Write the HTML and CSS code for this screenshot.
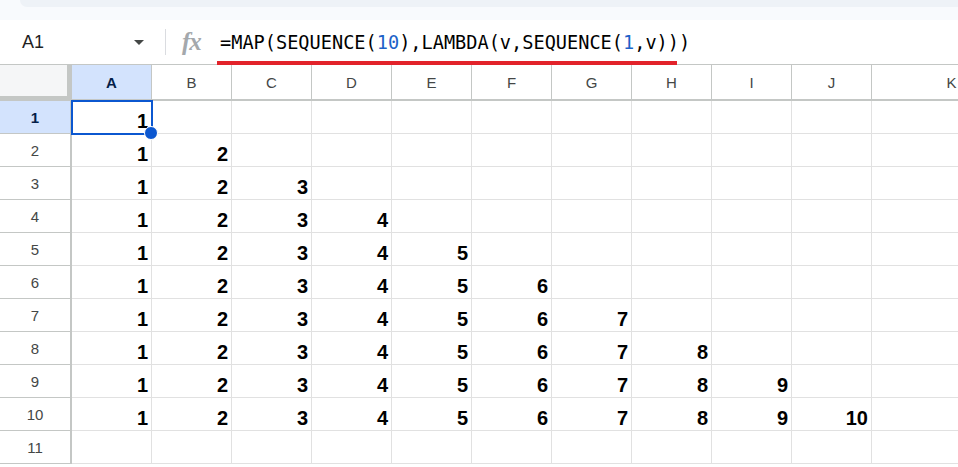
FILE: index.html
```html
<!DOCTYPE html>
<html lang="en">
<head>
  <meta charset="UTF-8">
  <meta name="viewport" content="width=device-width, initial-scale=1.0">
  <title>Sheet</title>
  <link rel="stylesheet" href="styles.css">
</head>
<body>
  <div class="toolbar-edge">
    <div class="toolbar-tail"></div>
  </div>

  <div class="formula-bar">
    <div class="name-box">
      <span class="cell-ref">A1</span>
      <span class="caret"></span>
    </div>
    <div class="divider"></div>
    <span class="fx">fx</span>
    <div class="formula">=MAP(SEQUENCE(<span class="num">10</span>),LAMBDA(v,SEQUENCE(<span class="num">1</span>,v)))</div>
    <div class="highlight"></div>
  </div>

  <div class="sheet" id="sheet"></div>

  <script>
    // Build the grid: header row, row numbers, and the triangle of values
    const sheet = document.getElementById('sheet');
    const letters = ['A', 'B', 'C', 'D', 'E', 'F', 'G', 'H', 'I', 'J', 'K'];
    const rows = 11;

    function add(cls, text) {
      const el = document.createElement('div');
      el.className = cls;
      if (text !== undefined) el.textContent = text;
      sheet.appendChild(el);
      return el;
    }

    // Column headers
    add('corner');
    letters.forEach((l, i) => {
      add(i === 0 ? 'col-head active' : 'col-head', l);
    });

    // Rows
    for (let r = 1; r <= rows; r++) {
      add(r === 1 ? 'row-head active' : 'row-head', r);
      for (let c = 1; c <= letters.length; c++) {
        const value = (r <= 10 && c <= r) ? c : '';
        const cell = add('cell', value);
        if (r === 1 && c === 1) {
          cell.classList.add('selected');
          const handle = document.createElement('span');
          handle.className = 'fill-handle';
          cell.appendChild(handle);
        }
      }
    }
  </script>
</body>
</html>
```

FILE: styles.css
```css
body {
  margin: 0;
  background: #fff;
  font-family: 'Liberation Sans', Arial, sans-serif;
  color: #1f1f1f;
  width: 958px;
  height: 467px;
  overflow: hidden;
}

/* bottom edge of the toolbar above */
.toolbar-edge {
  height: 20px;
  background: #f8fafd;
}

.toolbar-tail {
  margin-left: 20px;
  height: 7px;
  background: #eef2f7;
  border-bottom-left-radius: 14px;
}

.formula-bar {
  position: relative;
  height: 44px;
  display: flex;
  align-items: center;
}

.name-box {
  width: 144px;
  display: flex;
  align-items: center;
  justify-content: space-between;
  padding: 0 0 0 22px;
  box-sizing: border-box;
}

.cell-ref {
  font-size: 18px;
  color: #1f1f1f;
}

.caret {
  width: 0;
  height: 0;
  border-left: 5px solid transparent;
  border-right: 5px solid transparent;
  border-top: 5px solid #444746;
  margin-top: 1px;
}

.divider {
  width: 1px;
  height: 26px;
  background: #dadce0;
  margin: 0 0 0 21px;
}

.fx {
  font-family: 'Liberation Serif', serif;
  font-style: italic;
  font-weight: bold;
  font-size: 25px;
  color: #a4a8ac;
  margin-left: 16px;
  letter-spacing: -1px;
  width: 38px;
}

.formula {
  font-family: 'DejaVu Sans Mono', monospace;
  font-size: 18.6px;
  color: #000;
  white-space: nowrap;
}

.formula .num {
  color: #1d62c8;
}

/* red marker under the formula */
.highlight {
  position: absolute;
  left: 217px;
  top: 41px;
  width: 460px;
  height: 4px;
  background: #e2222a;
  z-index: 2;
}

.sheet {
  display: grid;
  grid-template-columns: 72px repeat(10, 80px) 160px;
  grid-template-rows: 36px;
  grid-auto-rows: 33px;
  border-top: 1px solid #c4c7c5;
  width: 958px;
  overflow: hidden;
}

.sheet > div {
  box-sizing: border-box;
}

.corner {
  background: #f5f6f7;
  border-right: 5px solid #c4c7c5;
  border-bottom: 5px solid #c4c7c5;
}

.col-head {
  display: flex;
  align-items: center;
  justify-content: center;
  font-size: 15px;
  color: #444746;
  border-right: 1px solid #c4c7c5;
  border-bottom: 2px solid #c4c7c5;
}

.row-head {
  display: flex;
  align-items: center;
  justify-content: center;
  font-size: 15px;
  color: #444746;
  border-right: 2px solid #c4c7c5;
  border-bottom: 1px solid #c4c7c5;
}

.col-head.active,
.row-head.active {
  background: #d3e3fd;
  color: #041e49;
  font-weight: bold;
}

.cell {
  position: relative;
  display: flex;
  align-items: flex-end;
  justify-content: flex-end;
  padding: 0 3px 2px 0;
  font-size: 20px;
  line-height: 20px;
  font-weight: bold;
  color: #000;
  border-right: 1px solid #e1e1e1;
  border-bottom: 1px solid #e1e1e1;
}

.cell.selected {
  outline: 2px solid #0b57d0;
  outline-offset: -1px;
  z-index: 1;
}

.fill-handle {
  position: absolute;
  right: -7px;
  bottom: -7px;
  width: 12px;
  height: 12px;
  border-radius: 50%;
  background: #0b57d0;
  border: 1px solid #fff;
}
```
